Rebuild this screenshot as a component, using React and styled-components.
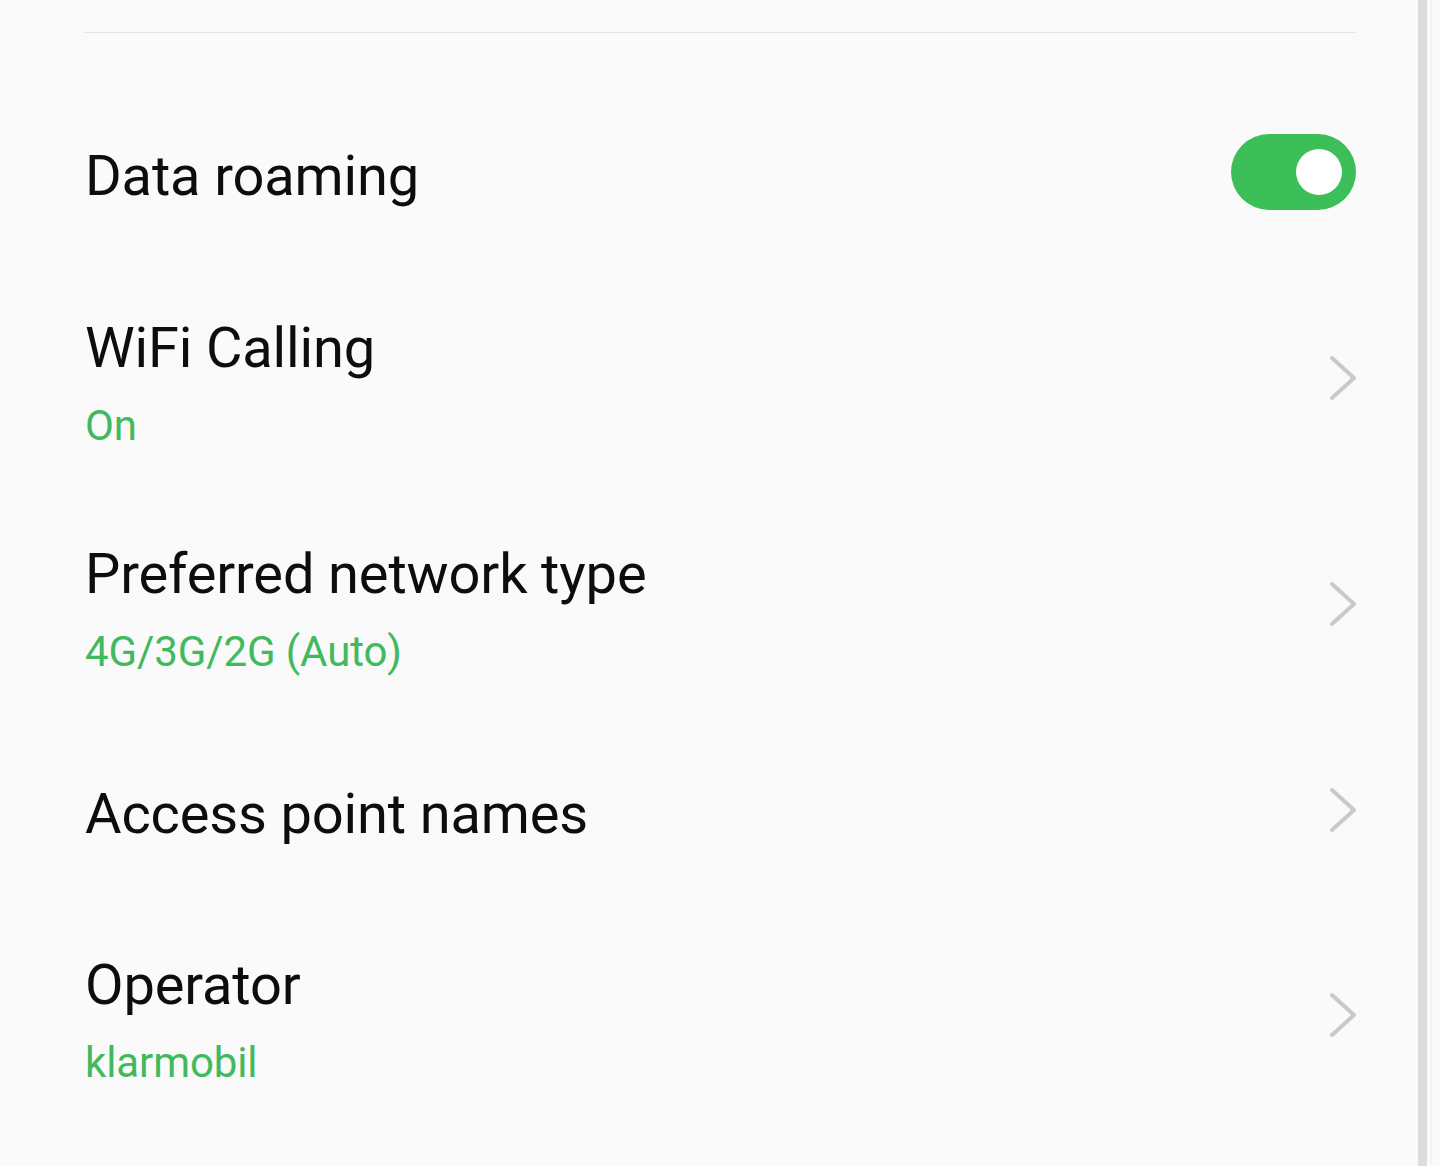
import React from "react";
import styled, { createGlobalStyle } from "styled-components";

const Global = createGlobalStyle`
  html, body { margin: 0; padding: 0; background: #fafafa; }
  body { font-family: Roboto, "Noto Sans", "Liberation Sans", sans-serif; -webkit-font-smoothing: antialiased; }
`;

const Screen = styled.div`
  display: flex;
  width: 1440px;
  height: 1166px;
  overflow: hidden;
  background: #fafafa;
`;

const Content = styled.main`
  flex: 1;
  padding: 32px 62px 0 85px;
  display: flex;
  flex-direction: column;
`;

const Divider = styled.div`
  height: 1px;
  background: #e3e3e3;
`;

const List = styled.div`
  margin-top: 48px;
  display: flex;
  flex-direction: column;
`;

const Row = styled.div`
  height: ${(p) => p.$h}px;
  display: flex;
  align-items: center;
  justify-content: space-between;
`;

const TextBlock = styled.div`
  display: flex;
  flex-direction: column;
  padding-top: 4px;
`;

const Title = styled.div`
  font-size: 56px;
  line-height: 66px;
  color: #0d0d0d;
  letter-spacing: -0.15px;
`;

const Sub = styled.div`
  font-size: 42px;
  line-height: 49px;
  margin-top: 20px;
  color: #41b95d;
  letter-spacing: -0.1px;
`;

const Toggle = styled.div`
  width: 125px;
  height: 76px;
  border-radius: 38px;
  background: #3cbe58;
  display: flex;
  align-items: center;
  justify-content: flex-end;
  padding-right: 14px;
  box-sizing: border-box;
  margin-top: -4px;
`;

const Knob = styled.div`
  width: 46px;
  height: 46px;
  border-radius: 50%;
  background: #ffffff;
`;

const ChevronBox = styled.div`
  width: 28px;
  height: 46px;
  display: flex;
  margin-right: -1px;
  margin-top: -4px;
`;

const Scrollbar = styled.div`
  width: 9px;
  background: #dcdcdc;
`;

const Edge = styled.div`
  width: 13px;
  display: flex;
  padding-left: 4px;
  box-sizing: border-box;
`;

const EdgeLine = styled.div`
  width: 1px;
  background: #f1f1f1;
`;

const Chevron = () => (
  <ChevronBox>
    <svg width="28" height="46" viewBox="0 0 28 46" fill="none">
      <polyline
        points="3,3 25,23 3,43"
        stroke="#c9c9c9"
        strokeWidth="4"
        strokeLinecap="round"
        strokeLinejoin="round"
      />
    </svg>
  </ChevronBox>
);

const rows = [
  { title: "WiFi Calling", sub: "On", h: 226 },
  { title: "Preferred network type", sub: "4G/3G/2G (Auto)", h: 226 },
  { title: "Access point names", h: 185 },
  { title: "Operator", sub: "klarmobil", h: 226 },
];

export default function App() {
  return (
    <>
      <Global />
      <Screen>
        <Content>
          <Divider />
          <List>
            <Row $h={186}>
              <TextBlock>
                <Title>Data roaming</Title>
              </TextBlock>
              <Toggle>
                <Knob />
              </Toggle>
            </Row>
            {rows.map((r) => (
              <Row key={r.title} $h={r.h}>
                <TextBlock>
                  <Title>{r.title}</Title>
                  {r.sub && <Sub>{r.sub}</Sub>}
                </TextBlock>
                <Chevron />
              </Row>
            ))}
          </List>
        </Content>
        <Scrollbar />
        <Edge>
          <EdgeLine />
        </Edge>
      </Screen>
    </>
  );
}
